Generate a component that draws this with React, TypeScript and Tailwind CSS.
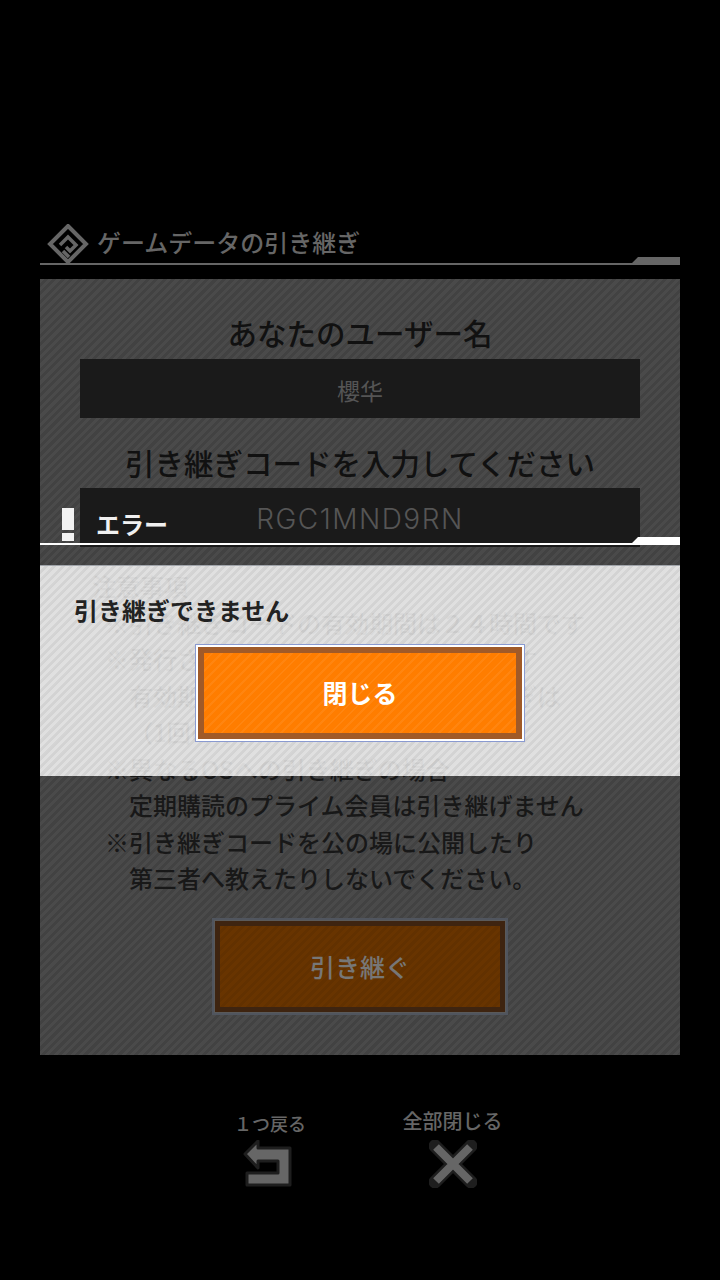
import React from "react";

const notes = [
  { text: "注意事項", className: "ml-[-13px]" },
  { text: "※引き継ぎコードの有効期間は２４時間です", className: "" },
  { text: "※発行されたコードは一度のみ有効です", className: "" },
  { text: "有効期限が過ぎたコードでの引き継ぎは", className: "ml-[24px]" },
  { text: "（1回のみ）", className: "ml-[24px]" },
  { text: "※異なるOSへの引き継ぎの場合", className: "" },
  { text: "定期購読のプライム会員は引き継げません", className: "ml-[24px]" },
  { text: "※引き継ぎコードを公の場に公開したり", className: "" },
  { text: "第三者へ教えたりしないでください。", className: "ml-[24px]" },
];

const Logo = () => (
  <svg width="42" height="40" viewBox="0 0 42 40" fill="none" className="mt-[5px]">
    <path d="M21 2 L39 20 L21 38 L3 20 Z" stroke="#666" strokeWidth="4" />
    <path d="M13 21 L21 13 L29 21 L23 27 L19 23" stroke="#666" strokeWidth="3.5" />
    <path d="M16 27 L22 33" stroke="#666" strokeWidth="3.5" />
  </svg>
);

const Rule = ({ color }: { color: string }) => (
  <svg width="640" height="8" viewBox="0 0 640 8" className="block">
    <path d="M0 6 H592 L598 0 H640 V8 H0 Z" fill={color} />
  </svg>
);

const BackIcon = () => (
  <svg width="54" height="52" viewBox="0 0 54 52" fill="none" className="mt-[5px] mr-[8px]">
    <path
      d="M19 1 L6 14 L19 28 V21 H39 V33 H8 V45 H51 V8 H19 Z"
      fill="#666"
      stroke="#1e1e1e"
      strokeWidth="3"
      strokeLinejoin="round"
    />
  </svg>
);

const CloseIcon = () => (
  <svg width="48" height="48" viewBox="0 0 48 48" fill="none" className="mt-[6px]">
    <path d="M6 6 L42 42 M42 6 L6 42" stroke="#1e1e1e" strokeWidth="13" strokeLinecap="round" />
    <path d="M7 7 L41 41 M41 7 L7 41" stroke="#666" strokeWidth="8" />
  </svg>
);

const App = () => {
  return (
    <div className="relative h-[1280px] w-[720px] overflow-hidden bg-black font-['Noto_Sans_CJK_JP','Noto_Sans',sans-serif]">
      {/* title */}
      <div className="px-[40px] pt-[226px]">
        <div className="flex h-[31px] items-center pl-[7px]">
          <Logo />
          <span className="ml-[8px] text-[24px] leading-[36px] font-medium text-[#666]">
            ゲームデータの引き継ぎ
          </span>
        </div>
        <Rule color="#666" />
      </div>

      {/* main panel */}
      <div className="mx-[40px] mt-[14px] flex h-[776px] flex-col bg-[repeating-linear-gradient(135deg,#4a4a4a_0,#4a4a4a_3px,#424242_3px,#424242_6px)]">
        <h2 className="mt-[33px] h-[40px] text-center text-[29.5px] leading-[40px] font-medium text-[#111]">
          あなたのユーザー名
        </h2>
        <div className="mx-[40px] mt-[7px] flex h-[59px] items-center justify-center bg-[#1a1a1a] pt-[3px] text-[23px] text-[#555]">
          櫻华
        </div>
        <h2 className="mt-[24px] h-[40px] text-center text-[29.5px] leading-[40px] font-medium text-[#111]">
          引き継ぎコードを入力してください
        </h2>
        <div className="mx-[40px] mt-[6px] flex h-[59px] items-center justify-center bg-[#1a1a1a] pt-[2px] font-['Inter',sans-serif] text-[28px] font-light tracking-[1.5px] text-[#555]">
          RGC1MND9RN
        </div>

        <div className="mt-[21px] pl-[65px]">
          {notes.map((note) => (
            <p
              key={note.text}
              className={`h-[36.5px] text-[24px] leading-[36.5px] font-medium whitespace-nowrap text-[#181818] ${note.className}`}
            >
              {note.text}
            </p>
          ))}
        </div>

        <button className="mx-auto mt-[21.5px] flex h-[97px] w-[296px] items-center justify-center border-2 border-[#50555e] bg-[#5a5a5a] p-[1px]">
          <span className="flex h-full w-full items-center justify-center border-[5px] border-[#3e2410] bg-[repeating-linear-gradient(135deg,#683400_0,#683400_3px,#623100_3px,#623100_6px)] text-[25px] font-medium text-[#777]">
            引き継ぐ
          </span>
        </button>
      </div>

      {/* footer */}
      <div className="mt-[56px] flex items-start">
        <div className="ml-[234px] flex w-[72px] flex-col items-center">
          <span className="text-[18px] leading-[24px] font-medium whitespace-nowrap text-[#666]">１つ戻る</span>
          <BackIcon />
        </div>
        <div className="mt-[-3px] ml-[97px] flex w-[99px] flex-col items-center">
          <span className="text-[20px] leading-[26px] font-medium whitespace-nowrap text-[#666]">全部閉じる</span>
          <CloseIcon />
        </div>
      </div>

      {/* error dialog */}
      <div className="absolute top-[505px] right-[40px] left-[40px]">
        <div className="flex h-[32px] items-start">
          <div className="ml-[22px] flex h-[36px] w-[12px] flex-col justify-between pt-[3px]">
            <div className="h-[22px] bg-[#f2f2f2]" />
            <div className="h-[8px] bg-[#f2f2f2]" />
          </div>
          <span className="ml-[22px] text-[24px] leading-[38px] font-bold text-[#f0f0f0]">エラー</span>
        </div>
        <Rule color="#ffffff" />
        <div className="mt-[20px] h-[211px] border-t border-[#a0a4aa] bg-[repeating-linear-gradient(135deg,rgba(255,255,255,0.83)_0,rgba(255,255,255,0.83)_3px,rgba(255,255,255,0.77)_3px,rgba(255,255,255,0.77)_6px)] pt-[29px]">
          <p className="ml-[34px] h-[30px] text-[24px] leading-[30px] font-bold text-[#222]">
            引き継ぎできません
          </p>
          <button className="mx-auto mt-[19px] flex h-[98px] w-[330px] items-center justify-center border border-[#8a9ad0] bg-white p-[2px]">
            <span className="flex h-full w-full items-center justify-center border-[6px] border-[#a05a28] bg-[repeating-linear-gradient(135deg,#ff7d00_0,#ff7d00_5px,#ff8510_5px,#ff8510_7px)] text-[25px] font-bold text-white">
              閉じる
            </span>
          </button>
        </div>
      </div>
    </div>
  );
};

export default App;
